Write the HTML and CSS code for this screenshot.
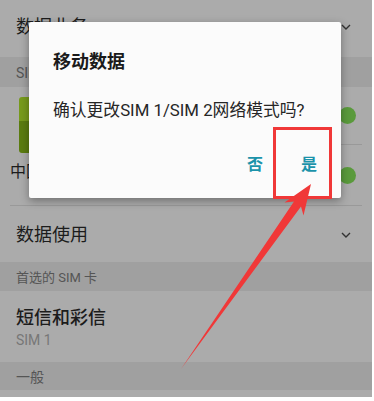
FILE: index.html
```html
<!DOCTYPE html>
<html lang="zh-CN">
  <head>
    <meta charset="UTF-8" />
    <meta name="viewport" content="width=device-width, initial-scale=1.0" />
    <title>双卡管理</title>
    <link rel="stylesheet" href="styles.css">
  </head>
  <body>
    <div class="screen">
      <!-- settings list behind the dimmed overlay -->
      <div class="row row-top">
        <span class="row-title">数据业务</span>
        <svg class="chevron" viewBox="0 0 10 6"><polyline points="1,1 5,5 9,1" /></svg>
      </div>

      <div class="band">SIM 卡</div>

      <div class="sim-block">
        <div class="sim-left">
          <div class="sim-card"></div>
          <span class="sim-name">中国联通</span>
        </div>
        <div class="sim-right">
          <div class="toggle-cell"><span class="knob"></span></div>
          <div class="toggle-cell"><span class="knob"></span></div>
        </div>
      </div>

      <div class="row row-usage">
        <span class="row-title">数据使用</span>
        <svg class="chevron" viewBox="0 0 10 6"><polyline points="1,1 5,5 9,1" /></svg>
      </div>

      <div class="band band-pref">首选的 SIM 卡</div>

      <div class="row row-sms">
        <span class="row-title strong">短信和彩信</span>
        <span class="row-sub">SIM 1</span>
      </div>

      <div class="band band-general">一般</div>
      <div class="row-tail"></div>

      <!-- dialog -->
      <div class="dialog">
        <div class="dialog-title">移动数据</div>
        <div class="dialog-msg">确认更改SIM 1/SIM 2网络模式吗?</div>
        <div class="dialog-actions">
          <button class="dialog-btn">否</button>
          <button class="dialog-btn">是</button>
        </div>
      </div>

      <!-- annotation -->
      <div class="mark-box"></div>
      <svg class="mark-arrow" viewBox="0 0 374 401">
        <polygon points="181,369 301,206.5 303.5,215.5 311,184 284.5,202.5 294,201.5" />
      </svg>
    </div>
  </body>
</html>
```

FILE: styles.css
```css
* {
  margin: 0;
  padding: 0;
  box-sizing: border-box;
}

body {
  background: #ffffff;
  font-family: Roboto, "Noto Sans CJK SC", sans-serif;
  color: #1c1c1c;
}

.screen {
  position: relative;
  width: 372px;
  height: 397px;
  background: #ababab;
  overflow: hidden;
}

/* list rows */
.row {
  display: flex;
  align-items: center;
  justify-content: space-between;
  padding: 0 21px 0 16px;
}

.row-top {
  height: 57px;
  padding-bottom: 3px;
}

.row-title {
  font-size: 18px;
  line-height: 24px;
}

.row-title.strong {
  font-weight: 500;
}

.chevron {
  width: 10px;
  height: 6px;
  fill: none;
  stroke: #333;
  stroke-width: 1.4;
}

.band {
  height: 30px;
  display: flex;
  align-items: center;
  padding-left: 16px;
  background: #a0a0a0;
  font-size: 14px;
  color: #555;
}

/* sim card block */
.sim-block {
  display: flex;
  justify-content: space-between;
  height: 119px;
  margin: 0 10px 0 10px;
  border-bottom: 1px solid #999;
}

.sim-left {
  display: flex;
  flex-direction: column;
  align-items: flex-start;
  padding-top: 10px;
}

.sim-card {
  width: 40px;
  height: 56px;
  margin-left: 9px;
  border-radius: 3px;
  background: linear-gradient(180deg, #779a1c 0 42%, #5b7c10 42% 100%);
}

.sim-name {
  margin-top: 8px;
  font-size: 16px;
  line-height: 22px;
}

.sim-right {
  display: flex;
  flex-direction: column;
  width: 40px;
}

.toggle-cell {
  height: 57px;
  display: flex;
  align-items: center;
  justify-content: flex-end;
  padding-right: 6px;
}

.toggle-cell + .toggle-cell {
  height: 61px;
  border-top: 1px solid #999;
}

.knob {
  width: 17px;
  height: 17px;
  border-radius: 50%;
  background: #5a9a3c;
}

.row-usage {
  height: 56px;
  padding-top: 2px;
}

.row-sms {
  flex-direction: column;
  align-items: flex-start;
  justify-content: center;
  height: 71px;
  padding-top: 3px;
}

.row-sub {
  font-size: 14px;
  line-height: 20px;
  color: #777;
}

.band-pref {
  height: 29px;
  font-size: 13px;
}

.band-general {
  height: 28px;
}

.row-tail {
  height: 7px;
}

/* dialog over the dimmed list */
.dialog {
  position: absolute;
  left: 29px;
  top: 22px;
  width: 312px;
  height: 176px;
  background: #fbfbfb;
  border-radius: 2px;
  box-shadow: 0 3px 8px rgba(0, 0, 0, 0.35);
  padding: 29px 24px 0 24px;
}

.dialog-title {
  font-size: 18px;
  line-height: 22px;
  font-weight: 700;
  color: #1a1a1a;
}

.dialog-msg {
  margin-top: 25px;
  font-size: 16.8px;
  line-height: 24px;
  color: #262626;
}

.dialog-actions {
  display: flex;
  justify-content: flex-end;
  gap: 38px;
  margin-top: 31px;
}

.dialog-btn {
  border: none;
  background: none;
  font-family: inherit;
  font-size: 16px;
  line-height: 24px;
  font-weight: 700;
  color: #1b93aa;
}

/* red annotation */
.mark-box {
  position: absolute;
  left: 273px;
  top: 127px;
  width: 59px;
  height: 72px;
  border: 3px solid #f03838;
}

.mark-arrow {
  position: absolute;
  left: 0;
  top: 0;
  width: 374px;
  height: 401px;
  fill: #f03838;
}
```
